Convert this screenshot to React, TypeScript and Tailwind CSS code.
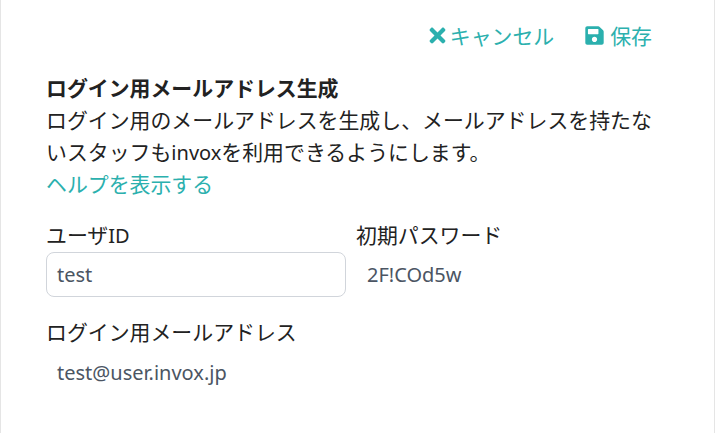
import { FaTimes, FaSave } from "react-icons/fa";

export default function App() {
  return (
    <div className="w-[715px] h-[433px] overflow-hidden bg-white border-x border-[#e5e5e5] font-['Noto_Sans','Noto_Sans_CJK_JP',sans-serif] text-[20.9px] leading-[32px] text-[#222222] px-[45px]">
      <div className="flex justify-end items-center gap-[30px] pt-[19px] pr-[17px] h-[52px] text-[#2bb0ae]">
        <div className="flex items-center gap-[1px]"><FaTimes className="w-[23px] h-[23px] shrink-0" /><span>キャンセル</span></div>
        <div className="flex items-center gap-[5px]"><FaSave className="w-[21px] h-[21px] shrink-0" /><span>保存</span></div>
      </div>
      <div className="mt-[20px] font-bold">ログイン用メールアドレス生成</div>
      <div className="w-[620px]">ログイン用のメールアドレスを生成し、メールアドレスを持たないスタッフも<span className="text-[20px] leading-none">invox</span>を利用できるようにします。</div>
      <div className="text-[#2bb0ae]">ヘルプを表示する</div>
      <div className="flex mt-[19px]">
        <div className="w-[300px] mr-[10px]">
          <div className="h-[33px]">ユーザ<span className="text-[20px] leading-none">ID</span></div>
          <div className="h-[45px] border border-[#d1d5db] rounded-[8px] px-[10px] flex items-center text-[20px] text-[#4b5563]">test</div>
        </div>
        <div>
          <div className="h-[33px]">初期パスワード</div>
          <div className="h-[45px] px-[11px] flex items-center text-[20px] text-[#4b5563]">2F!COd5w</div>
        </div>
      </div>
      <div className="mt-[19px]">ログイン用メールアドレス</div>
      <div className="h-[49px] px-[11px] flex items-center text-[20px] text-[#4b5563]">test@user.invox.jp</div>
    </div>
  );
}
